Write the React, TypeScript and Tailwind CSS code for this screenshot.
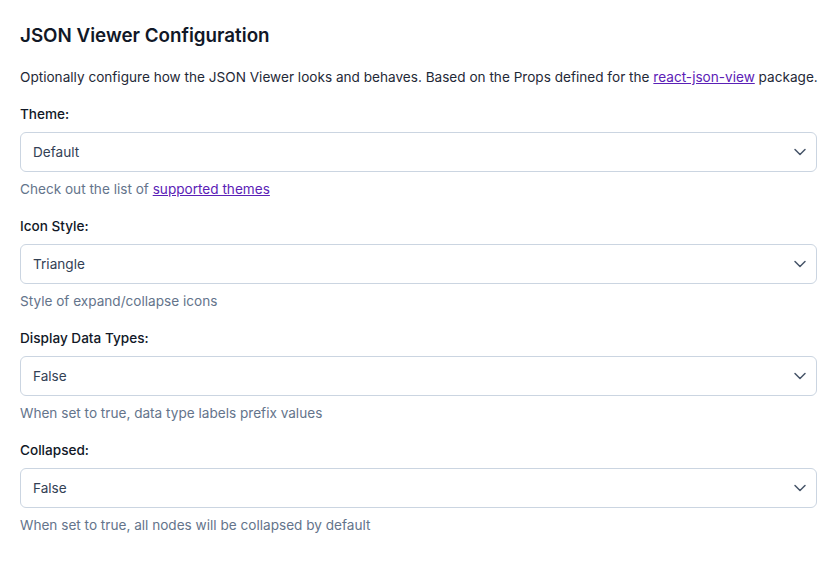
import { ChevronDown } from "lucide-react";

const fields = [
  { label: "Theme:", value: "Default", help: "theme" },
  { label: "Icon Style:", value: "Triangle", help: "Style of expand/collapse icons" },
  { label: "Display Data Types:", value: "False", help: "When set to true, data type labels prefix values" },
  { label: "Collapsed:", value: "False", help: "When set to true, all nodes will be collapsed by default" },
];

export default function App() {
  return (
    <div className="min-h-screen bg-white pl-5 pr-[18px] pt-[22px] font-['Inter',sans-serif] text-[13.6px]">
      <h2 className="text-[18.8px] leading-7 font-semibold text-[#111827]">JSON Viewer Configuration</h2>
      <p className="mt-[17px] leading-5 text-[#1f2937] whitespace-nowrap">
        Optionally configure how the JSON Viewer looks and behaves. Based on the Props defined for the{" "}
        <a href="#" className="text-[#5b21b6] underline">react-json-view</a> package.
      </p>
      <div className="mt-[17px] flex flex-col gap-[17px]">
        {fields.map((f) => (
          <div key={f.label} className="flex flex-col">
            <label className="leading-5 font-medium text-[#111827]">{f.label}</label>
            <div className="mt-2 h-10 flex items-center justify-between rounded-md border border-[#cbd5e1] bg-white pl-3 pr-[6px]">
              <span className="text-[#334155]">{f.value}</span>
              <ChevronDown size={20} strokeWidth={1.8} className="text-[#475569]" />
            </div>
            <p className="mt-[7px] leading-5 text-[#64748b]">
              {f.help === "theme" ? (
                <>
                  Check out the list of{" "}
                  <a href="#" className="text-[#5b21b6] underline">supported themes</a>
                </>
              ) : (
                f.help
              )}
            </p>
          </div>
        ))}
      </div>
    </div>
  );
}
